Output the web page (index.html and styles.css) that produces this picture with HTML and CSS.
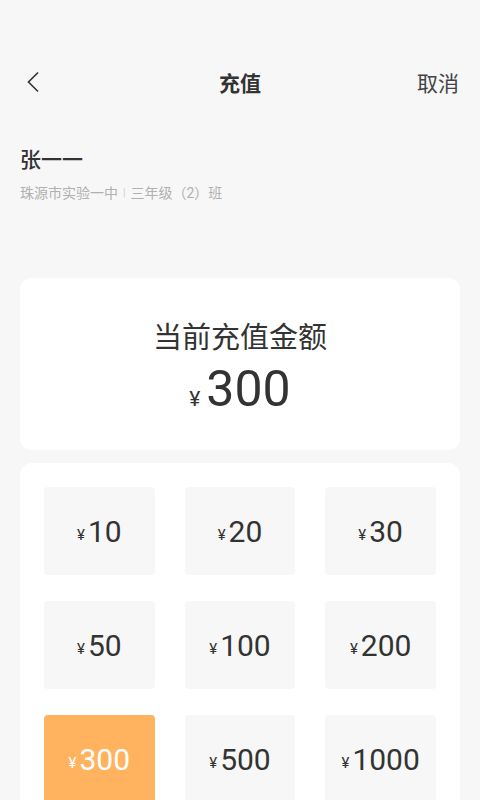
FILE: index.html
```html
<!DOCTYPE html>
<html lang="zh-CN">
<head>
    <meta charset="UTF-8">
    <meta name="viewport" content="width=device-width, initial-scale=1.0">
    <title>充值</title>
    <link rel="stylesheet" href="styles.css">
</head>
<body>

<div class="header">
    <svg class="back" width="14" height="22" viewBox="0 0 14 22">
        <polyline points="12,1.5 2.5,11 12,20.5" fill="none" stroke="#333" stroke-width="1.6"/>
    </svg>
    <h1>充值</h1>
    <span class="cancel">取消</span>
</div>

<div class="student">
    <div class="name">张一一</div>
    <div class="school">珠源市实验一中<span class="sep">|</span>三年级（2）班</div>
</div>

<div class="card current">
    <div class="label">当前充值金额</div>
    <div class="amount"><span class="yen">¥</span>300</div>
</div>

<div class="card options">
    <div class="option"><span class="yen">¥</span>10</div>
    <div class="option"><span class="yen">¥</span>20</div>
    <div class="option"><span class="yen">¥</span>30</div>
    <div class="option"><span class="yen">¥</span>50</div>
    <div class="option"><span class="yen">¥</span>100</div>
    <div class="option"><span class="yen">¥</span>200</div>
    <div class="option selected"><span class="yen">¥</span>300</div>
    <div class="option"><span class="yen">¥</span>500</div>
    <div class="option"><span class="yen">¥</span>1000</div>
</div>

</body>
</html>
```

FILE: styles.css
```css
body {
    font-family: Roboto, "Noto Sans CJK SC", sans-serif;
    background-color: #f7f7f7;
    color: #333;
    margin: 0;
    width: 480px;
    height: 800px;
    overflow: hidden;
}
.header {
    display: flex;
    align-items: center;
    justify-content: space-between;
    height: 44px;
    margin-top: 60px;
    padding: 0 21px 0 26px;
    position: relative;
}
.header h1 {
    position: absolute;
    left: 0;
    right: 0;
    margin: 0;
    text-align: center;
    font-size: 21px;
    font-weight: 700;
    pointer-events: none;
}
.back {
    display: block;
}
.cancel {
    font-size: 21px;
    color: #444;
}
.student {
    padding: 41px 20px 0;
}
.name {
    font-size: 21px;
    font-weight: 500;
    line-height: 30px;
}
.school {
    margin-top: 8px;
    font-size: 14px;
    color: #b0b0b0;
    line-height: 20px;
}
.sep {
    font-size: 10px;
    color: #ccc;
    margin: 0 5px;
    position: relative;
    top: -2px;
}
.card {
    background: white;
    border-radius: 12px;
    margin: 0 20px;
}
.current {
    margin-top: 73px;
    height: 172px;
    box-sizing: border-box;
    padding-top: 39px;
    text-align: center;
}
.label {
    font-size: 29px;
    line-height: 42px;
}
.amount {
    font-size: 50px;
    line-height: 56px;
    margin-top: 2px;
}
.amount .yen {
    font-size: 21px;
    margin-right: 6px;
}
.options {
    margin-top: 13px;
    padding: 24px;
    display: grid;
    grid-template-columns: repeat(3, 1fr);
    column-gap: 30px;
    row-gap: 26px;
}
.option {
    height: 88px;
    background: #f7f7f7;
    border-radius: 4px;
    display: flex;
    align-items: center;
    justify-content: center;
    font-size: 30px;
}
.option .yen {
    font-size: 15px;
    margin-right: 3px;
    margin-top: 7px;
}
.option.selected {
    background: #ffb35f;
    color: white;
}
```
